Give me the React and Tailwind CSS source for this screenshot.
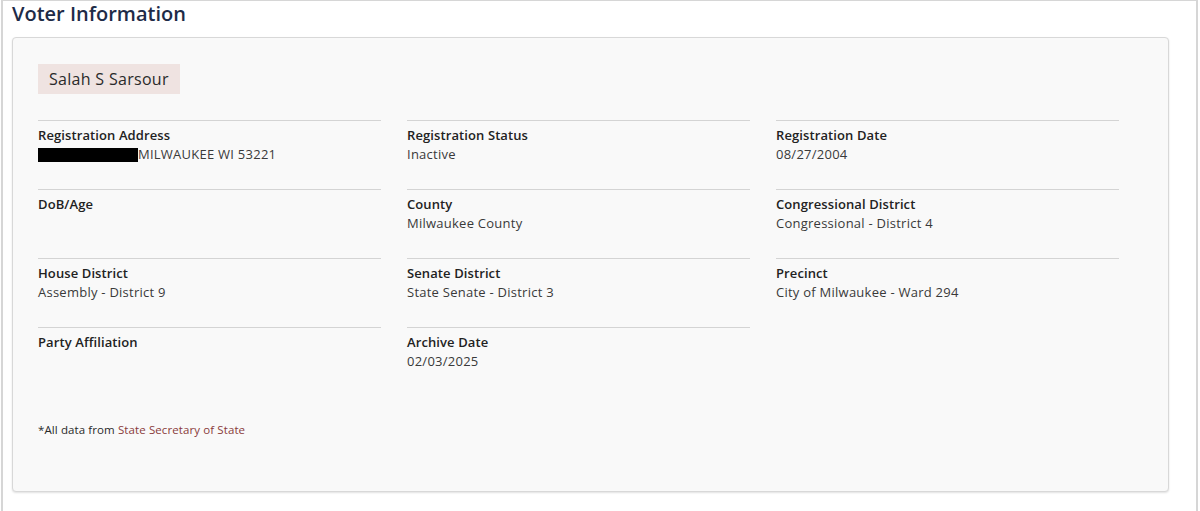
import React from "react";

const rows = [
  [
    { label: "Registration Address", value: "MILWAUKEE WI 53221", redact: true },
    { label: "Registration Status", value: "Inactive" },
    { label: "Registration Date", value: "08/27/2004" },
  ],
  [
    { label: "DoB/Age", value: "" },
    { label: "County", value: "Milwaukee County" },
    { label: "Congressional District", value: "Congressional - District 4" },
  ],
  [
    { label: "House District", value: "Assembly - District 9" },
    { label: "Senate District", value: "State Senate - District 3" },
    { label: "Precinct", value: "City of Milwaukee - Ward 294" },
  ],
  [
    { label: "Party Affiliation", value: "" },
    { label: "Archive Date", value: "02/03/2025" },
    null,
  ],
];

function Field({ f }) {
  if (!f) return <div />;
  return (
    <div className="border-t border-[#d4d4d4] h-[69px] pt-[5px]">
      <div className="text-[13px] font-semibold text-[#222] leading-[19px] tracking-[0.1px]">{f.label}</div>
      <div className="text-[13px] text-[#3a3a3a] leading-[19px] tracking-[0.25px] flex items-center">
        {f.redact && <span className="inline-block w-[100px] h-[14px] bg-black" />}
        {f.value}
      </div>
    </div>
  );
}

export default function App() {
  return (
    <div
      className="w-[1200px] h-[511px] bg-white overflow-hidden"
      style={{ fontFamily: "'Open Sans', 'Noto Sans', sans-serif" }}
    >
      <div className="ml-[1px] mr-[2px] h-[511px] border-l-2 border-r-2 border-t border-[#d6d6d6] pl-[9px] pr-[27px]">
        <h1 className="text-[20px] font-semibold text-[#1e2b47] leading-[26px] pt-[0px] pb-[10px]">
          Voter Information
        </h1>
        <div className="h-[455px] bg-[#f9f9f9] border border-[#d8d8d8] rounded-[4px] shadow-[0_1px_2px_rgba(0,0,0,0.12)] pl-[25px] pt-[26px]">
          <div className="inline-block bg-[#efe3e1] px-[11px] h-[30px] leading-[30px] text-[16px] tracking-[0.3px] text-[#2a2a2a]">
            Salah S Sarsour
          </div>
          <div className="mt-[26px] grid grid-cols-[343px_343px_343px] gap-x-[26px] w-fit">
            {rows.flat().map((f, i) => (
              <Field key={i} f={f} />
            ))}
          </div>
          <div className="mt-[25px] text-[11.5px] tracking-[0.1px] text-[#2a2a2a]">
            *All data from <span className="text-[#8a3b3b]">State Secretary of State</span>
          </div>
        </div>
      </div>
    </div>
  );
}
